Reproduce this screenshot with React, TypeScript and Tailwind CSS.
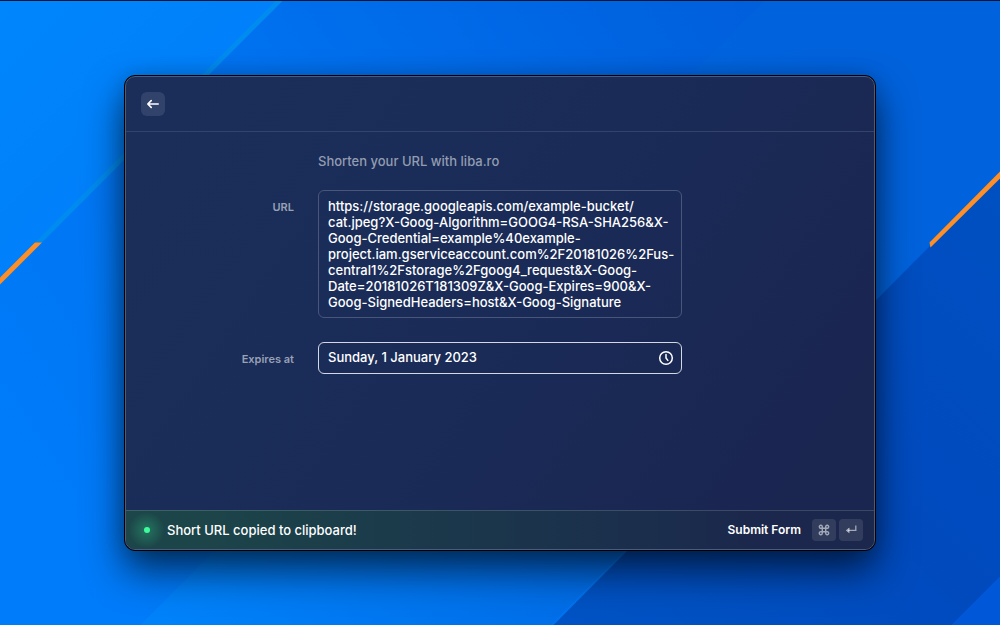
import React from "react";

const longUrl = [
  "https://storage.googleapis.com/example-bucket/",
  "cat.jpeg?X-Goog-Algorithm=GOOG4-RSA-SHA256&X-",
  "Goog-Credential=example%40example-",
  "project.iam.gserviceaccount.com%2F20181026%2Fus-",
  "central1%2Fstorage%2Fgoog4_request&X-Goog-",
  "Date=20181026T181309Z&X-Goog-Expires=900&X-",
  "Goog-SignedHeaders=host&X-Goog-Signature",
].join("\n");

function Wallpaper() {
  return (
    <svg
      className="absolute inset-0 h-full w-full"
      viewBox="0 0 1000 625"
      preserveAspectRatio="xMidYMid slice"
      aria-hidden="true"
    >
      <defs>
        <linearGradient id="bandA" gradientUnits="userSpaceOnUse" x1="0" y1="0" x2="140" y2="140">
          <stop offset="0" stopColor="#0086fc" />
          <stop offset="1" stopColor="#0080fa" />
        </linearGradient>
        <linearGradient id="bandB" gradientUnits="userSpaceOnUse" x1="0" y1="500" x2="740" y2="0">
          <stop offset="0" stopColor="#007cfa" />
          <stop offset="0.5" stopColor="#0072f0" />
          <stop offset="1" stopColor="#005fdc" />
        </linearGradient>
        <linearGradient id="bandC" gradientUnits="userSpaceOnUse" x1="150" y1="600" x2="900" y2="200">
          <stop offset="0" stopColor="#0082fa" />
          <stop offset="0.5" stopColor="#006ae4" />
          <stop offset="1" stopColor="#0062dc" />
        </linearGradient>
        <linearGradient id="bandD" gradientUnits="userSpaceOnUse" x1="560" y1="625" x2="1000" y2="180">
          <stop offset="0" stopColor="#0053c4" />
          <stop offset="0.5" stopColor="#004abe" />
          <stop offset="1" stopColor="#0050c2" />
        </linearGradient>
      </defs>
      <rect width="1000" height="625" fill="url(#bandB)" />
      <path d="M0 0H280L0 280Z" fill="url(#bandA)" />
      <path d="M765 0H1000V175L550 625H140Z" fill="url(#bandC)" />
      <path d="M1000 175V625H553Z" fill="url(#bandD)" />
      <path d="M1000 576V625H951Z" fill="#0058d8" />
      <path d="M276 0H283L42 242H35Z" fill="#008bf0" />
      <path d="M35 242H42L0 284V277Z" fill="#ff8e24" />
      <path d="M1000 171V178L930.5 247L929.5 242Z" fill="#ff8e24" />
    </svg>
  );
}

function BackArrow() {
  return (
    <svg className="size-4" viewBox="0 0 16 16" fill="none" stroke="currentColor" strokeWidth="1.6" strokeLinecap="round" strokeLinejoin="round" aria-hidden="true">
      <path d="M13.2 8H3M6.2 4.6L2.8 8L6.2 11.4" />
    </svg>
  );
}

function Clock() {
  return (
    <svg className="size-4" viewBox="0 0 16 16" fill="none" stroke="currentColor" strokeWidth="1.5" strokeLinecap="round" strokeLinejoin="round" aria-hidden="true">
      <circle cx="8" cy="8" r="6.3" />
      <path d="M8 4.5V8L9.8 10.4" />
    </svg>
  );
}

function CommandIcon() {
  return (
    <svg className="size-3" viewBox="0 0 12 12" fill="none" stroke="currentColor" strokeWidth="1.4" aria-hidden="true">
      <path d="M4.3 4.3H7.7V7.7H4.3ZM4.3 4.3V2.9A1.5 1.5 0 1 0 2.9 4.3ZM7.7 4.3H9.1A1.5 1.5 0 1 0 7.7 2.9ZM7.7 7.7V9.1A1.5 1.5 0 1 0 9.1 7.7ZM4.3 7.7H2.9A1.5 1.5 0 1 0 4.3 9.1Z" />
    </svg>
  );
}

function ReturnIcon() {
  return (
    <svg className="size-3" viewBox="0 0 12 12" fill="none" stroke="currentColor" strokeWidth="1.3" aria-hidden="true">
      <path d="M10.8 1.4V6.4H3" />
      <path d="M4.2 4V8.8L1.2 6.4Z" fill="currentColor" strokeWidth="0.6" strokeLinejoin="round" />
    </svg>
  );
}

const keyClass =
  "flex h-[22px] w-6 items-center justify-center rounded-[4px] bg-white/10 text-white/55";

export default function App() {
  return (
    <main className="relative flex min-h-screen flex-col items-center overflow-hidden border-t border-[#04142c] bg-[#0070ee] px-6 pt-[74px] pb-[74px] font-['Inter',sans-serif] text-[13px] leading-4 font-medium text-white">
      <Wallpaper />
      <div className="relative w-full max-w-[752px] rounded-[11px] border border-black bg-black shadow-[0_20px_38px_rgba(0,0,0,0.62),0_0_20px_rgba(0,0,0,0.14)]">
        <form
          className="flex flex-col overflow-hidden rounded-[10px] border border-[#4c5a7b] bg-[linear-gradient(125deg,#1b2e5a_0%,#1a2b57_50%,#1a2550_90%)]"
          onSubmit={(event) => event.preventDefault()}
        >
          <header className="flex h-[55px] items-center border-b border-[#33436a] px-[15px]">
            <button type="button" aria-label="Back" className="flex size-6 items-center justify-center rounded-md bg-white/10">
              <BackArrow />
            </button>
          </header>

          <div className="grid min-h-[378px] grid-cols-[1fr_minmax(0,364px)_1fr] content-start gap-x-6 pt-[21px] text-[13px]">
            <p className="col-start-2 mb-[21px] text-[#939cb1]">Shorten your URL with liba.ro</p>

            <label htmlFor="url" className="col-start-1 pt-[9px] text-right text-[11px] font-semibold text-[#98a1b5]">
              URL
            </label>
            <textarea
              id="url"
              rows={7}
              spellCheck={false}
              defaultValue={longUrl}
              className="mb-6 block w-full resize-none overflow-hidden rounded-md border border-[#48567a] bg-transparent py-[7px] pr-1 pl-[9px] outline-none"
            />

            <label htmlFor="expires" className="col-start-1 pt-[9px] text-right text-[11px] font-semibold text-[#98a1b5]">
              Expires at
            </label>
            <div className="flex h-8 items-center rounded-md border border-[#d3d8e3] pr-[7px] pl-[9px]">
              <input
                id="expires"
                type="text"
                defaultValue="Sunday, 1 January 2023"
                className="h-full min-w-0 flex-1 bg-transparent pb-[2px] outline-none"
              />
              <Clock />
            </div>
          </div>

          <footer className="flex h-[39px] items-center border-t border-white/15 bg-[linear-gradient(90deg,#1c4649_0%,#1c4449_12%,#1b384b_42%,#1b2e4c_70%,#1b274c_85%)] pr-[11px]">
            <div className="flex w-[41px] items-center justify-center self-stretch bg-[radial-gradient(circle,rgba(56,240,150,0.28)_0px,rgba(56,240,150,0)_18px)]">
              <span className="size-1.5 rounded-full bg-[#3dfc9c]" />
            </div>
            <p role="status" className="flex-1">Short URL copied to clipboard!</p>
            <button type="submit" className="flex items-center gap-[3px] text-xs font-semibold">
              <span className="mr-2">Submit Form</span>
              <kbd className={keyClass}>
                <CommandIcon />
              </kbd>
              <kbd className={keyClass}>
                <ReturnIcon />
              </kbd>
            </button>
          </footer>
        </form>
      </div>
    </main>
  );
}
